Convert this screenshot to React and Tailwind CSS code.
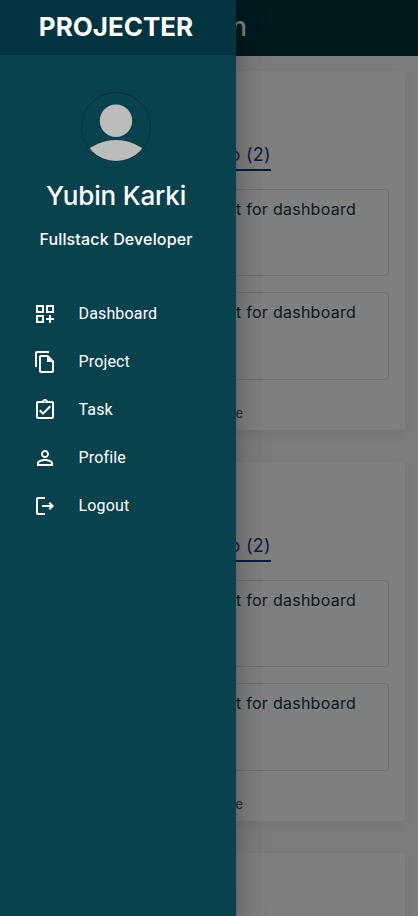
import React from "react";

function Icon({ d }) {
  return (
    <svg viewBox="0 0 24 24" className="size-6 shrink-0 fill-current" aria-hidden="true">
      <path d={d} />
    </svg>
  );
}

const links = [
  {
    label: "Dashboard",
    d: "M3 11h8V3H3v8zm2-6h4v4H5V5zm8-2v8h8V3h-8zm6 6h-4V5h4v4zM3 21h8v-8H3v8zm2-6h4v4H5v-4zm13-2h-2v3h-3v2h3v3h2v-3h3v-2h-3v-3z",
  },
  {
    label: "Project",
    d: "M16 1H4c-1.1 0-2 .9-2 2v14h2V3h12V1zm-1 4H8c-1.1 0-1.99.9-1.99 2L6 21c0 1.1.89 2 1.99 2H19c1.1 0 2-.9 2-2V11l-6-6zM8 21V7h6v5h5v9H8z",
  },
  {
    label: "Task",
    d: "M18 9l-1.41-1.42L10 14.17l-2.59-2.58L6 13l4 4zM19 3h-4.18C14.4 1.84 13.3 1 12 1s-2.4.84-2.82 2H5c-.14 0-.27.01-.4.04-.39.08-.74.28-1.01.55-.18.18-.33.4-.43.64-.1.23-.16.49-.16.77v14c0 .27.06.54.16.78s.25.45.43.64c.27.27.62.47 1.01.55.13.02.26.03.4.03h14c1.1 0 2-.9 2-2V5c0-1.1-.9-2-2-2zm-7-.25c.41 0 .75.34.75.75s-.34.75-.75.75-.75-.34-.75-.75.34-.75.75-.75zM19 19H5V5h14v14z",
  },
  {
    label: "Profile",
    d: "M12 5.9c1.16 0 2.1.94 2.1 2.1s-.94 2.1-2.1 2.1S9.9 9.16 9.9 8s.94-2.1 2.1-2.1m0 9c2.97 0 6.1 1.46 6.1 2.1v1.1H5.9V17c0-.64 3.13-2.1 6.1-2.1M12 4C9.79 4 8 5.79 8 8s1.79 4 4 4 4-1.79 4-4-1.79-4-4-4zm0 9c-2.67 0-8 1.34-8 4v3h16v-3c0-2.66-5.33-4-8-4z",
  },
  {
    label: "Logout",
    d: "m17 8-1.41 1.41L17.17 11H9v2h8.17l-1.58 1.58L17 16l4-4-4-4zM5 5h7V3H5c-1.1 0-2 .9-2 2v14c0 1.1.9 2 2 2h7v-2H5V5z",
  },
];

function Task({ className }) {
  return (
    <div className={`rounded border border-[#dedede] pt-[7px] pr-8 text-right text-base leading-6 tracking-[0.26px] text-[#15363e] ${className}`}>
      Project for dashboard
    </div>
  );
}

function ProjectCard() {
  return (
    <section className="h-[359px] w-[392px] shrink-0 rounded bg-white px-4 pt-[70px] shadow-[0_4px_14px_rgba(0,0,0,0.09)]">
      <div className="flex w-[242px] justify-end">
        <h2 className="border-b-2 border-[#14387f] pb-px text-lg leading-[27px] tracking-[0.3px] text-[#2c3c83]">To Do (2)</h2>
      </div>
      <Task className="mt-[18px] h-[87px]" />
      <Task className="mt-4 h-[88px]" />
      <div className="mt-[23px] w-[214px] text-right text-[13px] leading-5 text-[#555]">See more</div>
    </section>
  );
}

export default function App() {
  return (
    <div className="relative h-[916px] w-[418px] overflow-hidden bg-[#f9f9f9] font-['Inter',sans-serif]">
      <header className="flex h-14 items-center bg-[#03343e] pb-[3px]">
        <div className="w-[247px] text-right text-[26px] font-medium text-white">Admin</div>
      </header>
      <main className="flex flex-col gap-8 pt-[15px] pl-[13px]">
        <ProjectCard />
        <ProjectCard />
        <section className="h-[63px] w-[392px] shrink-0 rounded-t bg-white shadow-[0_4px_14px_rgba(0,0,0,0.09)]" />
      </main>

      <div className="absolute inset-0 bg-black/50" />

      <aside className="absolute inset-y-0 left-0 w-[236px] bg-[#09414c] text-white shadow-[0_8px_10px_-5px_rgba(0,0,0,0.2),0_16px_24px_2px_rgba(0,0,0,0.14),0_6px_30px_5px_rgba(0,0,0,0.12)]">
        <div className="flex h-[55px] items-center justify-center bg-[#04343f] pr-1 pb-0.5 text-[26px] font-bold">
          PROJECTER
        </div>
        <div className="flex flex-col items-center pt-[37px] pr-1">
          <svg viewBox="0 0 70 70" className="size-[70px]" aria-hidden="true">
            <defs>
              <clipPath id="avatar">
                <circle cx="35" cy="35" r="34.3" />
              </clipPath>
            </defs>
            <g clipPath="url(#avatar)" fill="#babdbb">
              <circle cx="35" cy="28.8" r="16.2" />
              <ellipse cx="35" cy="73" rx="35" ry="25" />
            </g>
            <circle cx="35" cy="35" r="34.5" fill="none" stroke="#04333d" />
          </svg>
          <div className="mt-[14px] text-[26px] leading-10 font-medium tracking-[-0.18px]">Yubin Karki</div>
          <div className="mt-[11px] text-base leading-6 font-medium tracking-[0.15px]">Fullstack Developer</div>
        </div>
        <nav className="mt-[39px] font-['Roboto',sans-serif]">
          {links.map((link) => (
            <a key={link.label} className="flex h-12 items-center gap-[21.5px] pl-[33px] text-base tracking-[0.15px]">
              <Icon d={link.d} />
              <span>{link.label}</span>
            </a>
          ))}
        </nav>
      </aside>
    </div>
  );
}
